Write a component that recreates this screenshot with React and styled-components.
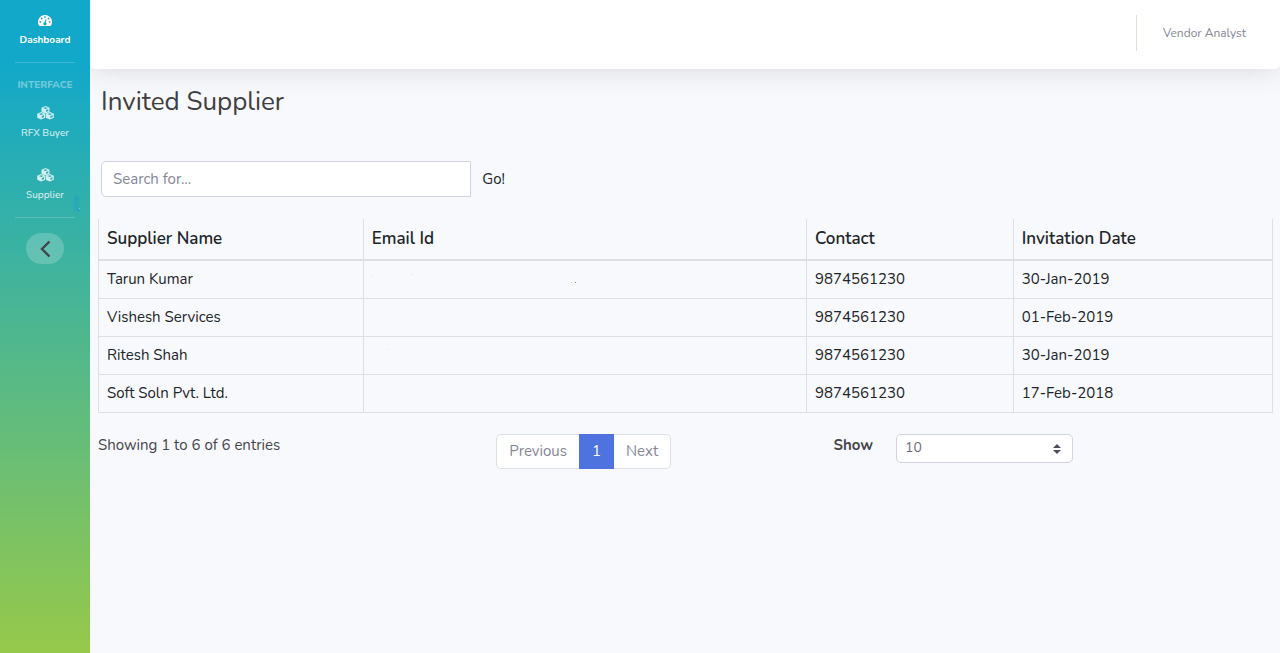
import React from "react";
import styled, { createGlobalStyle } from "styled-components";

const GlobalStyle = createGlobalStyle`
  *, *::before, *::after { box-sizing: border-box; }
  body {
    margin: 0;
    background: #f8f9fc;
    color: #212529;
    font-family: Nunito, Lato, "Noto Sans", sans-serif;
    font-size: 15px;
    line-height: 24px;
  }
  button, input, select { font: inherit; }
`;

const Layout = styled.div`
  display: flex;
  min-height: 100vh;
`;

const Sidebar = styled.nav`
  position: relative;
  display: flex;
  flex-direction: column;
  align-items: center;
  flex: 0 0 90px;
  background: linear-gradient(180deg, #12a8c9 10%, #96c94a 100%);
`;

const NavLink = styled.a`
  display: flex;
  flex-direction: column;
  align-items: center;
  width: 100%;
  height: 62px;
  padding-top: ${(p) => (p.$active ? 13 : 12)}px;
  color: ${(p) => (p.$active ? "#fff" : "rgba(255, 255, 255, 0.8)")};
  font-size: 10px;
  font-weight: ${(p) => (p.$active ? 700 : 500)};
  line-height: 16px;
  text-decoration: none;

  svg {
    height: 16px;
    margin-bottom: ${(p) => (p.$active ? 3 : 4)}px;
  }
`;

const Divider = styled.hr`
  width: 60px;
  margin: 0;
  border: 0;
  border-top: 1px solid rgba(255, 255, 255, 0.2);
`;

const Heading = styled.div`
  padding-top: 14px;
  color: rgba(255, 255, 255, 0.4);
  font-size: 10px;
  font-weight: 800;
  line-height: 16px;
`;

const Links = styled.div`
  width: 100%;
`;

const Toggle = styled.button`
  display: flex;
  align-items: center;
  justify-content: center;
  width: 38px;
  height: 31px;
  margin-top: 15px;
  padding: 0;
  border: 0;
  border-radius: 16px;
  background: rgba(255, 255, 255, 0.2);
  color: #45434d;
`;

const Smudge = styled.svg`
  position: absolute;
  top: 194px;
  right: 9px;
`;

const Page = styled.div`
  flex: 1;
  min-width: 0;
`;

const Topbar = styled.header`
  display: flex;
  justify-content: flex-end;
  height: 69px;
  padding: 15px 34px 0 0;
  border-radius: 0 0 5px 5px;
  background: #fff;
  box-shadow: 0 2px 28px rgba(58, 59, 69, 0.15);
`;

const User = styled.a`
  height: 36px;
  padding-left: 26px;
  border-left: 1px solid #dddfeb;
  color: #858796;
  font-size: 12px;
  line-height: 36px;
  text-decoration: none;
`;

const Content = styled.main`
  padding: 17px 7px 24px 8px;
`;

const Title = styled.h1`
  margin: 0 0 43px 3px;
  color: #3f3f42;
  font-size: 26px;
  font-weight: 400;
  line-height: 32px;
`;

const Search = styled.form`
  display: flex;
  margin: 0 0 22px 3px;
`;

const SearchInput = styled.input`
  width: 31.6%;
  height: 36px;
  padding: 0 11px;
  border: 1px solid #d1d3e2;
  border-radius: 5px 0 0 5px;
  background: #fff;
  color: #6e707e;

  &::placeholder { color: #858796; opacity: 1; }
`;

const GoButton = styled.button`
  padding: 0 11px;
  border: 0;
  background: none;
  color: #212529;
`;

const Table = styled.table`
  width: 100%;
  table-layout: fixed;
  border-collapse: collapse;
`;

const HeadCell = styled.th`
  width: ${(p) => p.$width};
  height: 41px;
  padding: 0 8px;
  border: 1px solid #dddfe0;
  border-top: 0;
  border-bottom-width: 2px;
  font-size: 17px;
  font-weight: 600;
  text-align: left;
`;

const Cell = styled.td`
  height: 38px;
  padding: 0 8px;
  border: 1px solid #dddfe0;
`;

const Marks = styled.svg`
  display: block;
`;

const Footer = styled.div`
  display: grid;
  grid-template-columns: 33.9% 1fr 37.4%;
  align-items: start;
  margin-top: 21px;
  color: #45464d;
`;

const Summary = styled.div`
  line-height: 22px;
`;

const Pager = styled.div`
  display: flex;
`;

const PageButton = styled.button`
  height: 35px;
  padding: 0 12px;
  border: 1px solid ${(p) => (p.$active ? "#4e73df" : "#dddfeb")};
  border-left-width: ${(p) => (p.$last ? 0 : 1)}px;
  border-right-width: ${(p) => (p.$first ? 0 : 1)}px;
  border-radius: ${(p) => (p.$first ? "5px 0 0 5px" : p.$last ? "0 5px 5px 0" : "0")};
  background: ${(p) => (p.$active ? "#4e73df" : "#fff")};
  color: ${(p) => (p.$active ? "#fff" : "#858796")};
`;

const PageSize = styled.div`
  display: flex;
  gap: 23px;
`;

const Label = styled.label`
  font-weight: 700;
  line-height: 22px;
`;

const SelectBox = styled.div`
  position: relative;
  width: 40.3%;

  svg {
    position: absolute;
    top: 10px;
    right: 12px;
    pointer-events: none;
  }
`;

const Select = styled.select`
  appearance: none;
  width: 100%;
  height: 29px;
  padding: 0 8px 1px;
  border: 1px solid #d1d3e2;
  border-radius: 5px;
  background: #fff;
  color: #6e707e;
  font-size: 14px;
`;

const GaugeIcon = () => (
  <svg width="14" height="16" viewBox="0 0 14 16" fill="currentColor" aria-hidden="true">
    <path
      fillRule="evenodd"
      d="M7 2a7 7 0 0 1 6 10.600Q12.700 13 12.200 13H1.800Q1.300 13 1 12.600A7 7 0 0 1 7 2Z
         M7 3.200a.9.9 0 1 0 0 1.800.9.9 0 0 0 0-1.800Z
         M3.700 4.600a.9.9 0 1 0 0 1.800.9.9 0 0 0 0-1.800Z
         M10.500 4.600a.9.9 0 1 0 0 1.800.9.9 0 0 0 0-1.800Z
         M2.300 8a.9.9 0 1 0 0 1.800.9.9 0 0 0 0-1.800Z
         M11.700 8a.9.9 0 1 0 0 1.800.9.9 0 0 0 0-1.800Z
         M7.500 6.200 6.600 9.300a1.500 1.500 0 1 0 1.100.2l.9-3Z"
    />
  </svg>
);

const cube =
  "M4 0 7.600 1.400Q8 1.600 8 2V5.400Q8 5.800 7.600 6L4 7.500.4 6Q0 5.800 0 5.400V2Q0 1.600.4 1.400ZM4 1.200 1.700 2.100 4 3 6.300 2.100ZM4.600 4.100V6L6.800 5.100V3.200Z";

const CubesIcon = () => (
  <svg width="17" height="16" viewBox="0 0 17 16" fill="currentColor" fillRule="evenodd" aria-hidden="true">
    <path d={cube} transform="translate(4.500 1)" />
    <path d={cube} transform="translate(.2 7)" />
    <path d={cube} transform="translate(8.800 7)" />
  </svg>
);

const suppliers = [
  { name: "Tarun Kumar", date: "30-Jan-2019", marks: [[0, 6, "#f0dcc4"], [40, 4, "#c9e2f4"], [199, 12, "#d4d6dc"], [203, 12, "#8b8f98"]] },
  { name: "Vishesh Services", date: "01-Feb-2019" },
  { name: "Ritesh Shah", date: "30-Jan-2019", marks: [[16, 3, "#e2e4ea"]] },
  { name: "Soft Soln Pvt. Ltd.", date: "17-Feb-2018" },
];

export default function App() {
  return (
    <>
      <GlobalStyle />
      <Layout>
        <Sidebar>
          <NavLink href="#dashboard" $active>
            <GaugeIcon />
            Dashboard
          </NavLink>
          <Divider />
          <Heading>INTERFACE</Heading>
          <Links>
            <NavLink href="#buyer"><CubesIcon />RFX Buyer</NavLink>
            <NavLink href="#supplier"><CubesIcon />Supplier</NavLink>
          </Links>
          <Divider />
          <Toggle type="button" aria-label="Collapse sidebar">
            <svg width="12" height="18" viewBox="0 0 12 18" fill="none" stroke="currentColor" strokeWidth="2.4">
              <path d="M10.500 1.500 3 9l7.500 7.500" />
            </svg>
          </Toggle>
          <Smudge width="8" height="20" viewBox="0 0 8 20" aria-hidden="true">
            <path d="M4 3 3 14l2 2" fill="none" stroke="#28aab8" strokeWidth="5" strokeLinecap="round" strokeLinejoin="round" />
            <path d="M6 14h1v1H6z" fill="#7fcdd0" />
          </Smudge>
        </Sidebar>
        <Page>
          <Topbar>
            <User href="#profile">Vendor Analyst</User>
          </Topbar>
          <Content>
            <Title>Invited Supplier</Title>
            <Search onSubmit={(e) => e.preventDefault()}>
              <SearchInput type="text" placeholder="Search for..." aria-label="Search for" />
              <GoButton type="submit">Go!</GoButton>
            </Search>
            <Table>
              <thead>
                <tr>
                  <HeadCell $width="22.55%">Supplier Name</HeadCell>
                  <HeadCell $width="37.75%">Email Id</HeadCell>
                  <HeadCell $width="17.62%">Contact</HeadCell>
                  <HeadCell>Invitation Date</HeadCell>
                </tr>
              </thead>
              <tbody>
                {suppliers.map((s) => (
                  <tr key={s.name}>
                    <Cell>{s.name}</Cell>
                    <Cell>
                      {s.marks && (
                        <Marks width="220" height="18" viewBox="0 0 220 18" aria-hidden="true">
                          {s.marks.map(([x, y, fill]) => (
                            <rect key={x} x={x} y={y} width="1" height="1" fill={fill} />
                          ))}
                        </Marks>
                      )}
                    </Cell>
                    <Cell>9874561230</Cell>
                    <Cell>{s.date}</Cell>
                  </tr>
                ))}
              </tbody>
            </Table>
            <Footer>
              <Summary>Showing 1 to 6 of 6 entries</Summary>
              <Pager>
                <PageButton type="button" $first>Previous</PageButton>
                <PageButton type="button" $active>1</PageButton>
                <PageButton type="button" $last>Next</PageButton>
              </Pager>
              <PageSize>
                <Label htmlFor="page-size">Show</Label>
                <SelectBox>
                  <Select id="page-size" defaultValue="10">
                    <option>10</option>
                    <option>25</option>
                    <option>50</option>
                  </Select>
                  <svg width="8" height="10" viewBox="0 0 8 10" fill="#4c4f5c" aria-hidden="true">
                    <path d="M4 0 8 4H0zM0 6h8L4 10z" />
                  </svg>
                </SelectBox>
              </PageSize>
            </Footer>
          </Content>
        </Page>
      </Layout>
    </>
  );
}
